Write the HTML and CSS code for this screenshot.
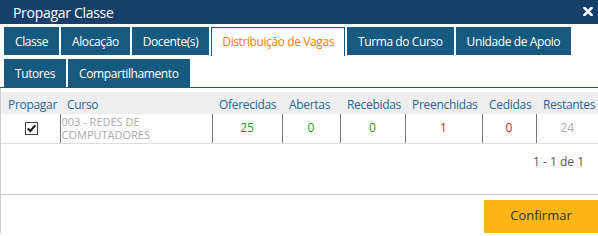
FILE: index.html
```html
<!DOCTYPE html>
<html lang="pt-BR">
<head>
    <meta charset="UTF-8">
    <title>Propagar Classe</title>
    <link rel="stylesheet" href="styles.css">
</head>
<body>
    <div class="dialog">
        <div class="titlebar">
            <span class="title">Propagar Classe</span>
            <svg class="close" width="10" height="9" viewBox="0 0 10 9">
                <path d="M1.5 1 L8.5 8 M8.5 1 L1.5 8" stroke="#fff" stroke-width="2.6" stroke-linecap="square"/>
            </svg>
        </div>

        <!-- Abas -->
        <div class="tabs">
            <div class="tab">Classe</div>
            <div class="tab">Alocação</div>
            <div class="tab">Docente(s)</div>
            <div class="tab active">Distribuição de Vagas</div>
            <div class="tab">Turma do Curso</div>
            <div class="tab">Unidade de Apoio</div>
            <div class="tab">Tutores</div>
            <div class="tab">Compartilhamento</div>
        </div>

        <div class="content">
            <table class="grid">
                <colgroup>
                    <col class="c-prop">
                    <col class="c-curso">
                    <col class="c-ofer">
                    <col class="c-abert">
                    <col class="c-receb">
                    <col class="c-preen">
                    <col class="c-ced">
                    <col>
                </colgroup>
                <thead>
                    <tr>
                        <th>Propagar</th>
                        <th>Curso</th>
                        <th>Oferecidas</th>
                        <th>Abertas</th>
                        <th>Recebidas</th>
                        <th>Preenchidas</th>
                        <th>Cedidas</th>
                        <th>Restantes</th>
                    </tr>
                </thead>
                <tbody>
                    <tr>
                        <td class="check">
                            <svg width="13" height="13" viewBox="0 0 13 13">
                                <rect x="0.5" y="0.5" width="12" height="12" fill="#fff" stroke="#444"/>
                                <path d="M2.8 6.4 L5.3 9 L10.3 3.4" fill="none" stroke="#111" stroke-width="2"/>
                            </svg>
                        </td>
                        <td class="curso">003 - REDES DE COMPUTADORES</td>
                        <td class="num green">25</td>
                        <td class="num green">0</td>
                        <td class="num green">0</td>
                        <td class="num red">1</td>
                        <td class="num red">0</td>
                        <td class="num grey">24</td>
                    </tr>
                </tbody>
            </table>

            <div class="pager">1 - 1 de 1</div>

            <div class="footer">
                <button class="btn">Confirmar</button>
            </div>
        </div>
    </div>
</body>
</html>
```

FILE: styles.css
```css
body {
    margin: 0;
    font-family: 'Open Sans', sans-serif;
    background-color: #fff;
    color: #333;
}
.dialog {
    width: 598px;
    height: 236px;
    overflow: hidden;
}
.titlebar {
    height: 24px;
    background-color: #16406b;
    display: flex;
    align-items: center;
    justify-content: space-between;
    padding: 0 5px 0 13px;
}
.title {
    color: #fff;
    font-size: 14px;
    letter-spacing: -0.3px;
}
.close {
    display: block;
    margin-bottom: 1px;
}
/* Abas */
.tabs {
    display: flex;
    flex-wrap: wrap;
    align-items: flex-start;
    gap: 4px 2px;
    height: 60px;
    padding: 3px 0 0 4px;
    border-bottom: 1px solid #175a80;
}
.tab {
    height: 28px;
    line-height: 29px;
    padding: 0 11px;
    background-color: #175a80;
    color: #fff;
    font-size: 12px;
    letter-spacing: -0.4px;
    box-sizing: border-box;
}
.tab.active {
    background-color: #fff;
    color: #f47b20;
    border: 1px solid #175a80;
    border-bottom: none;
    height: 29px;
    line-height: 27px;
    padding: 0 10px;
    margin-bottom: -1px;
}
.content {
    border-left: 1px solid #ccc;
    padding-top: 4px;
}
.grid {
    width: 100%;
    border-collapse: collapse;
    table-layout: fixed;
}
.c-prop { width: 59px; }
.c-curso { width: 152px; }
.c-ofer { width: 70px; }
.c-abert { width: 58px; }
.c-receb { width: 65px; }
.c-preen { width: 77px; }
.c-ced { width: 54px; }
.grid th {
    background-color: #eeeeee;
    color: #27659a;
    font-weight: normal;
    font-size: 12px;
    letter-spacing: -0.3px;
    text-align: left;
    height: 22px;
    line-height: 16px;
    padding: 4px 0 0 7px;
    box-sizing: border-box;
    white-space: nowrap;
}
.grid td {
    height: 29px;
    padding: 0;
    box-sizing: border-box;
    border-left: 1px solid #777;
    border-bottom: 1px solid #ddd;
    font-size: 12px;
    line-height: 16px;
    text-align: center;
}
.grid td.check {
    border-left: none;
}
.grid td.check svg {
    display: block;
    margin: 0 auto 0 24px;
}
.grid td.curso {
    text-align: left;
    color: #aaa;
    font-size: 11px;
    line-height: 13px;
    padding-left: 1px;
}
.green { color: #1f9a1f; }
.red { color: #e52222; }
.grey { color: #aaa; }
.pager {
    text-align: right;
    font-size: 12px;
    color: #555;
    padding: 9px 14px 0 0;
    height: 50px;
    box-sizing: border-box;
}
.footer {
    border-top: 1px solid #ccc;
    display: flex;
    justify-content: flex-end;
    padding-top: 5px;
}
.btn {
    width: 114px;
    height: 33px;
    border: none;
    background-color: #fdb515;
    color: #333;
    font-family: 'Open Sans', sans-serif;
    font-size: 13px;
    padding: 0 0 2px;
    cursor: pointer;
}
```
